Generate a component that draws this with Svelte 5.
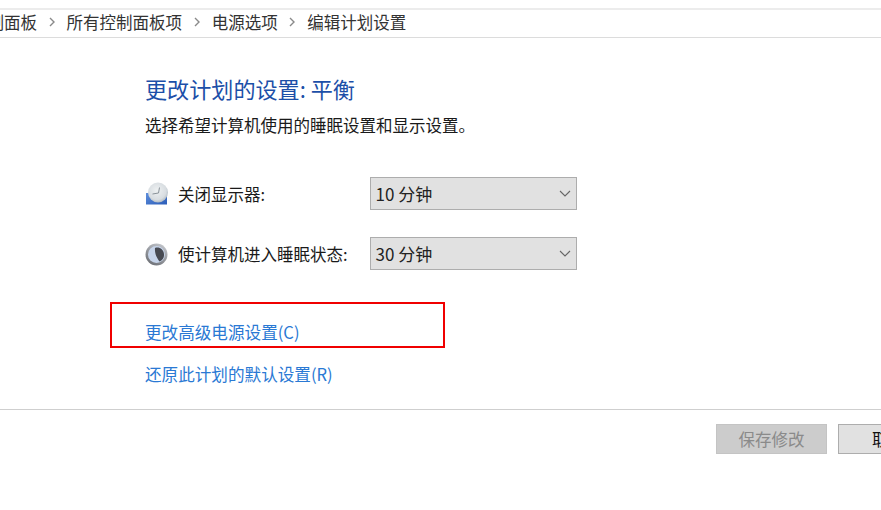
<script>
    const crumbs = ['控制面板', '所有控制面板项', '电源选项', '编辑计划设置'];
    const rows = [
        { label: '关闭显示器:', value: '10 分钟', icon: 'clock' },
        { label: '使计算机进入睡眠状态:', value: '30 分钟', icon: 'moon' },
    ];
</script>

<div class="page">
    <nav class="crumbs">
        {#each crumbs as crumb, i}
            {#if i > 0}
                <svg class="sep" width="8" height="10" viewBox="0 0 8 10"><path d="M2 1l4 4-4 4" fill="none" stroke="#8a8a8a" stroke-width="1.4" /></svg>
            {/if}
            <span>{crumb}</span>
        {/each}
    </nav>

    <main class="content">
        <h1>更改计划的设置: 平衡</h1>
        <p class="sub">选择希望计算机使用的睡眠设置和显示设置。</p>

        <div class="rows">
            {#each rows as row}
                <div class="row">
                    <div class="icon">
                        {#if row.icon === 'clock'}
                            <svg width="24" height="24" viewBox="0 0 24 24">
                                <defs>
                                    <linearGradient id="screen" x1="0" y1="0" x2="1" y2="1">
                                        <stop offset="0" stop-color="#5f8fdc" />
                                        <stop offset="1" stop-color="#2a5cb8" />
                                    </linearGradient>
                                    <radialGradient id="face" cx="0.45" cy="0.4" r="0.65">
                                        <stop offset="0" stop-color="#eef1f2" />
                                        <stop offset="0.7" stop-color="#d8dde1" />
                                        <stop offset="1" stop-color="#a6b1ba" />
                                    </radialGradient>
                                </defs>
                                <path d="M1 11h21v11.500H1z" fill="url(#screen)" />
                                <circle cx="13" cy="10.500" r="10" fill="url(#face)" />
                                <path d="M13.500 11l-6 1M13.500 11l1-5.500" stroke="#8a9299" stroke-width="1" fill="none" />
                            </svg>
                        {:else}
                            <svg width="24" height="24" viewBox="0 0 24 24">
                                <defs>
                                    <linearGradient id="ring" x1="0.8" y1="0" x2="0.2" y2="1">
                                        <stop offset="0" stop-color="#c5c8ce" />
                                        <stop offset="1" stop-color="#6a6d73" />
                                    </linearGradient>
                                </defs>
                                <circle cx="11.500" cy="12.500" r="11" fill="url(#ring)" />
                                <circle cx="11.500" cy="12.500" r="8.500" fill="#c6d4ea" />
                                <path d="M10 6c4-1.500 8.500 1 9 6 .4 3.500-1.500 6.500-4.500 7.500-1-1-2-3-3.300-5.500-.9-2.500-1.500-5-1.200-8z" fill="#474a52" />
                            </svg>
                        {/if}
                    </div>
                    <span class="label">{row.label}</span>
                    <div class="select">
                        <span>{row.value}</span>
                        <svg width="12" height="7" viewBox="0 0 12 7"><path d="M1 1l5 5 5-5" fill="none" stroke="#666" stroke-width="1.1" /></svg>
                    </div>
                </div>
            {/each}
        </div>

        <div class="links">
            <a href="#advanced">更改高级电源设置(C)</a>
            <a href="#restore">还原此计划的默认设置(R)</a>
        </div>
    </main>

    <footer class="actions">
        <button class="save" disabled>保存修改</button>
        <button class="cancel">取消</button>
    </footer>

    <div class="highlight"></div>
</div>

<style>
    :global(body) {
        margin: 0;
        background: #fff;
    }

    .page {
        position: relative;
        width: 881px;
        height: 510px;
        overflow: hidden;
        padding-top: 8px;
        box-sizing: border-box;
        font-family: "Noto Sans CJK SC", "Liberation Sans", sans-serif;
        font-size: 16.5px;
        color: #1a1a1a;
    }

    .crumbs {
        display: flex;
        align-items: center;
        gap: 9.800px;
        height: 30px;
        padding-bottom: 4px;
        margin-left: -29px;
        width: 910px;
        box-sizing: border-box;
        border-top: 2px solid #ececec;
        border-bottom: 1px solid #dcdcdc;
        font-size: 16.500px;
        color: #333;
        white-space: nowrap;
    }

    .sep {
        margin: 0 1px;
    }

    .content {
        padding: 35px 0 0 145px;
        height: 372px;
        box-sizing: border-box;
        border-bottom: 1px solid #cfcfcf;
    }

    h1 {
        margin: 0;
        font-size: 22.100px;
        line-height: 30px;
        font-weight: 400;
        color: #1c4fa8;
    }

    .sub {
        margin: 10px 0 0;
        line-height: 24px;
    }

    .rows {
        display: flex;
        flex-direction: column;
        gap: 27px;
        margin-top: 40px;
    }

    .row {
        display: flex;
        align-items: center;
        height: 33px;
    }

    .icon {
        width: 33px;
        display: flex;
        align-items: center;
    }

    .label {
        width: 191.500px;
    }

    .select {
        display: flex;
        align-items: center;
        justify-content: space-between;
        width: 207px;
        height: 33px;
        box-sizing: border-box;
        padding: 0 5px;
        background: #e1e1e1;
        border: 1px solid #adadad;
        color: #222;
        font-size: 17px;
    }

    .links {
        display: flex;
        flex-direction: column;
        gap: 18px;
        margin-top: 50px;
    }

    a {
        line-height: 24px;
        color: #2a79d4;
        text-decoration: none;
        font-size: 16.600px;
    }

    .actions {
        display: flex;
        gap: 11px;
        padding: 14px 0 0 716px;
    }

    button {
        flex: none;
        height: 30px;
        padding: 0;
        font: inherit;
        box-sizing: border-box;
    }

    .save {
        width: 111px;
        background: #cccccc;
        border: 1px solid #c4c4c4;
        color: #8a8a8a;
    }

    .cancel {
        width: 101px;
        background: #e1e1e1;
        border: 1px solid #adadad;
        color: #111;
    }

    .highlight {
        position: absolute;
        left: 110px;
        top: 302px;
        width: 335px;
        height: 46px;
        box-sizing: border-box;
        border: 2px solid #f00000;
    }
</style>
